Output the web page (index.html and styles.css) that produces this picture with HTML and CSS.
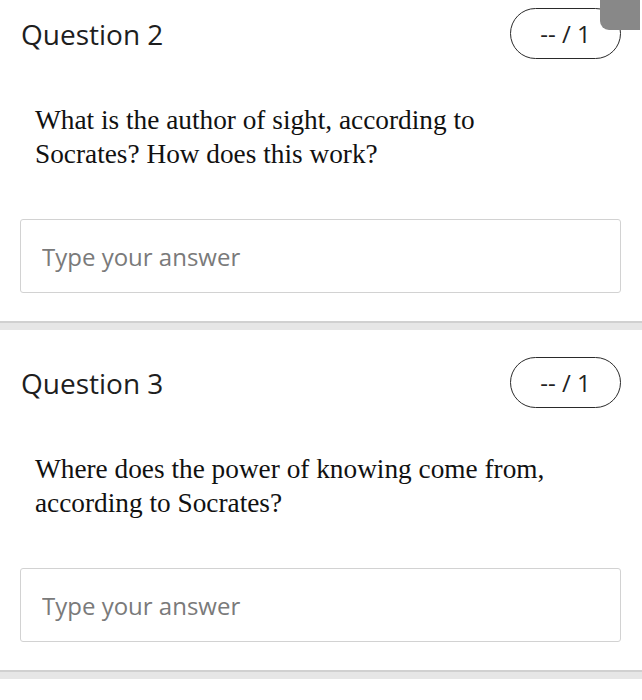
FILE: index.html
```html
<!DOCTYPE html>
<html lang="en">
<head>
<meta charset="utf-8">
<title>Questions</title>
<link rel="stylesheet" href="styles.css">
</head>
<body>
<div class="list">
  <section class="question">
    <div class="q-head">
      <h2 class="q-title">Question 2</h2>
      <span class="score">-- / 1</span>
    </div>
    <p class="q-text">What is the author of sight, according to Socrates? How does this work?</p>
    <input class="answer" type="text" placeholder="Type your answer">
  </section>
  <div class="divider"></div>
  <section class="question">
    <div class="q-head">
      <h2 class="q-title">Question 3</h2>
      <span class="score">-- / 1</span>
    </div>
    <p class="q-text">Where does the power of knowing come from, according to Socrates?</p>
    <input class="answer" type="text" placeholder="Type your answer">
  </section>
  <div class="divider"></div>
</div>
<div class="corner-tab"></div>
</body>
</html>
```
FILE: styles.css
```css
html, body {
  margin: 0;
  padding: 0;
  background: #fff;
}
body {
  font-family: "Open Sans", "Liberation Sans", sans-serif;
  color: #222;
  overflow: hidden;
}
.list {
  margin-top: -19px;
}
.question {
  background: #fff;
  padding: 27px 21px 28px 20px;
  display: flex;
  flex-direction: column;
}
.q-head {
  display: flex;
  justify-content: space-between;
  align-items: center;
}
.q-title {
  margin: 0;
  font-size: 28px;
  font-weight: 500;
  color: #1e1e1e;
  padding-left: 1px;
}
.score {
  box-sizing: border-box;
  width: 111px;
  height: 51px;
  border: 1.5px solid #2a2a2a;
  border-radius: 26px;
  display: flex;
  align-items: center;
  justify-content: center;
  font-size: 24px;
  color: #222;
}
.q-text {
  margin: 44px 0 48px 15px;
  width: 530px;
  font-family: "Liberation Serif", "Times New Roman", serif;
  font-size: 27.3px;
  line-height: 34px;
  color: #111;
}
.answer {
  box-sizing: border-box;
  width: 100%;
  height: 74px;
  margin: 0;
  border: 1.5px solid #d2d2d2;
  border-radius: 3px;
  padding: 0 0 0 21px;
  font-family: "Open Sans", "Liberation Sans", sans-serif;
  font-size: 24px;
  color: #222;
  background: #fff;
  outline: none;
}
.answer::placeholder {
  color: #7a7a7a;
}
.divider {
  height: 7px;
  background: #e6e6e6;
  border-top: 2px solid #d0d0d0;
}
.corner-tab {
  position: absolute;
  top: 0;
  right: 2px;
  width: 40px;
  height: 30px;
  background: #888;
  border-bottom-left-radius: 9px;
}
```
